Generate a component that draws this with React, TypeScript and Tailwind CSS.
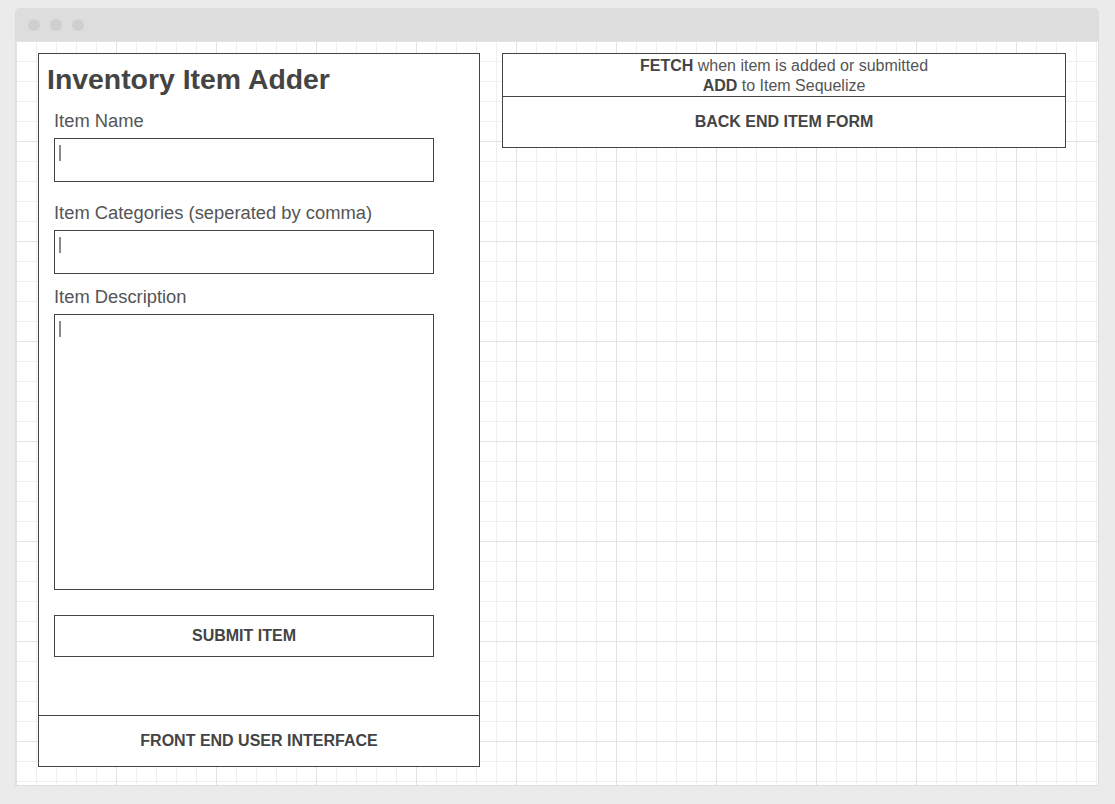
export default function App() {
  return (
    <div className="w-[1115px] h-[804px] bg-[#ebebeb] pt-[8px] pl-[15px] font-['Liberation_Sans',Arial,sans-serif] text-[#444]">
      <div className="w-[1084px]">
        {/* Title bar */}
        <div className="h-[33px] bg-[#dddddd] rounded-t-[5px] flex items-center pl-[13px] gap-[10px]">
          <span className="w-[12px] h-[12px] rounded-full bg-[#cfcfcf]" />
          <span className="w-[12px] h-[12px] rounded-full bg-[#cfcfcf]" />
          <span className="w-[12px] h-[12px] rounded-full bg-[#cfcfcf]" />
        </div>

        {/* Canvas */}
        <div className="h-[745px] bg-white border-x border-b border-[#dedede] [background-image:linear-gradient(to_right,#e3e3e3_1px,transparent_1px),linear-gradient(to_bottom,#e3e3e3_1px,transparent_1px),linear-gradient(to_right,#efefef_1px,transparent_1px),linear-gradient(to_bottom,#efefef_1px,transparent_1px)] [background-size:100px_100px,100px_100px,20px_20px,20px_20px] flex items-start pt-[12px] pl-[22px] gap-[22px]">
          {/* Front end panel */}
          <div className="w-[442px] h-[714px] border border-[#444] bg-white flex flex-col">
            <h1 className="pl-[8px] pt-[9px] text-[28.4px] leading-[32px] font-bold">
              Inventory Item Adder
            </h1>
            <div className="px-[15px] flex flex-col text-[#555]">
              <label className="mt-[14px] text-[18.35px] leading-[24px]">Item Name</label>
              <div className="mt-[5px] w-[380px] h-[44px] border border-[#444] pl-[4px] pt-[6px]">
                <div className="w-[2px] h-[16px] bg-[#8a8a8a]" />
              </div>

              <label className="mt-[19px] text-[18.35px] leading-[24px]">
                Item Categories (seperated by comma)
              </label>
              <div className="mt-[5px] w-[380px] h-[44px] border border-[#444] pl-[4px] pt-[6px]">
                <div className="w-[2px] h-[16px] bg-[#8a8a8a]" />
              </div>

              <label className="mt-[11px] text-[18.35px] leading-[24px]">Item Description</label>
              <div className="mt-[5px] w-[380px] h-[276px] border border-[#444] pl-[4px] pt-[6px]">
                <div className="w-[2px] h-[16px] bg-[#8a8a8a]" />
              </div>

              <button className="mt-[25px] w-[380px] h-[42px] border border-[#444] text-[16px] font-bold text-[#444] flex items-center justify-center">
                SUBMIT ITEM
              </button>
            </div>
            <div className="mt-auto h-[51px] border-t border-[#444] flex items-center justify-center text-[16px] font-bold">
              FRONT END USER INTERFACE
            </div>
          </div>

          {/* Back end panel */}
          <div className="w-[564px] border border-[#444] bg-white flex flex-col">
            <div className="h-[42px] pt-[2px] flex flex-col items-center justify-center text-[16px] leading-[20px] text-[#555]">
              <div>
                <span className="font-bold text-[#444]">FETCH</span> when item is added or submitted
              </div>
              <div>
                <span className="font-bold text-[#444]">ADD</span> to Item Sequelize
              </div>
            </div>
            <div className="h-[51px] border-t border-[#444] flex items-center justify-center text-[16px] font-bold">
              BACK END ITEM FORM
            </div>
          </div>
        </div>
      </div>
    </div>
  );
}
